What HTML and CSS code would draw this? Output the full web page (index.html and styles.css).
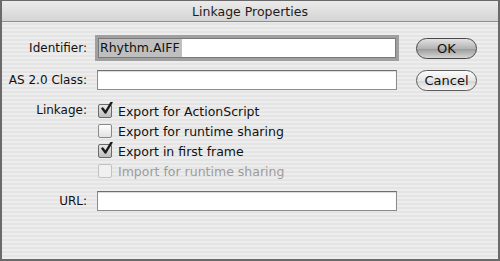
FILE: index.html
```html
<!DOCTYPE html>
<html lang="en">
<head>
    <meta charset="UTF-8">
    <title>Linkage Properties</title>
    <link rel="stylesheet" href="styles.css">
</head>
<body>

    <div class="dialog">
        <div class="titlebar">Linkage Properties</div>

        <div class="content">
            <div class="label">Identifier:</div>
            <div class="field focused"><span class="selected">Rhythm.AIFF</span></div>
            <div class="btn default">OK</div>

            <div class="label">AS 2.0 Class:</div>
            <div class="field"></div>
            <div class="btn">Cancel</div>

            <div class="label linkage-label">Linkage:</div>
            <div class="options">
                <div class="option">
                    <span class="check checked">
                        <svg viewBox="0 0 13 13" width="13" height="13"><path d="M2.5 6.5 L5.5 10.5 L11.5 0.5" fill="none" stroke="#1a1a1a" stroke-width="2.4" stroke-linecap="round" stroke-linejoin="round"/></svg>
                    </span>
                    Export for ActionScript
                </div>
                <div class="option">
                    <span class="check"></span>
                    Export for runtime sharing
                </div>
                <div class="option">
                    <span class="check checked">
                        <svg viewBox="0 0 13 13" width="13" height="13"><path d="M2.5 6.5 L5.5 10.5 L11.5 0.5" fill="none" stroke="#1a1a1a" stroke-width="2.4" stroke-linecap="round" stroke-linejoin="round"/></svg>
                    </span>
                    Export in first frame
                </div>
                <div class="option disabled">
                    <span class="check"></span>
                    Import for runtime sharing
                </div>
            </div>
            <div></div>

            <div class="label">URL:</div>
            <div class="field"></div>
            <div></div>
        </div>
    </div>

</body>
</html>
```

FILE: styles.css
```css
body {
    margin: 0;
    font-family: 'DejaVu Sans', sans-serif;
    background-color: #ffffff;
}

.dialog {
    width: 500px;
    height: 261px;
    box-sizing: border-box;
    border: 1px solid #6a6a6a;
    border-width: 1px 2px 2px 2px;
    background: repeating-linear-gradient(to bottom, #ededed 0, #ededed 2px, #e4e4e4 2px, #e4e4e4 4px);
    overflow: hidden;
}

.titlebar {
    height: 20px;
    line-height: 21px;
    text-align: center;
    font-size: 12.5px;
    color: #1c1c1c;
    background: linear-gradient(to bottom, #ebebeb, #d4d4d4);
    border-bottom: 1px solid #8e8e8e;
}

.content {
    display: grid;
    grid-template-columns: 85px 300px 70px;
    grid-template-rows: 22px 22px 80px 20px;
    column-gap: 10px;
    row-gap: 10px;
    padding-top: 15px;
    font-size: 12px;
    color: #111;
}

.label {
    text-align: right;
    align-self: center;
}

.linkage-label {
    align-self: start;
    margin-top: 2px;
}

.field {
    background-color: #ffffff;
    border: 1px solid #8c8c8c;
    border-top-color: #6e6e6e;
    height: 18px;
    align-self: center;
    box-shadow: inset 0 1px 1px rgba(0, 0, 0, 0.15);
    line-height: 18px;
}

.field.focused {
    border-color: #7a7a7a;
    box-shadow: 0 0 0 3px #a0a0a0;
    margin: 0 1px;
}

.selected {
    display: inline-block;
    background-color: #bfbfbf;
    padding: 0 2px 0 1px;
    font-size: 12.5px;
}

.btn {
    box-sizing: border-box;
    margin-left: 9px;
    height: 21px;
    line-height: 19px;
    text-align: center;
    font-size: 13px;
    color: #111;
    border: 1px solid #5c5c5c;
    border-radius: 11px;
    background: linear-gradient(to bottom, #fbfbfb 0%, #e6e6e6 50%, #d4d4d4 51%, #f4f4f4 100%);
    align-self: center;
}

.btn.default {
    border-color: #474747;
    background: linear-gradient(to bottom, #e2e2e2 0%, #b4b4b4 50%, #999999 51%, #d6d6d6 100%);
}

.options {
    display: flex;
    flex-direction: column;
}

.option {
    display: flex;
    align-items: center;
    height: 20px;
    font-size: 12.5px;
    margin-left: 1px;
}

.check {
    width: 12px;
    height: 12px;
    margin-right: 6px;
    border: 1px solid #8a8a8a;
    border-radius: 2px;
    background: linear-gradient(to bottom, #ffffff, #e2e2e2);
    position: relative;
    flex-shrink: 0;
}

.check.checked {
    background: linear-gradient(to bottom, #e8e8e8, #bdbdbd);
    border-color: #6a6a6a;
}

.check svg {
    position: absolute;
    left: 1px;
    top: -3px;
}

.option.disabled {
    color: #9c9c9c;
}

.option.disabled .check {
    border-color: #c2c2c2;
    background: #f0f0f0;
}
```
